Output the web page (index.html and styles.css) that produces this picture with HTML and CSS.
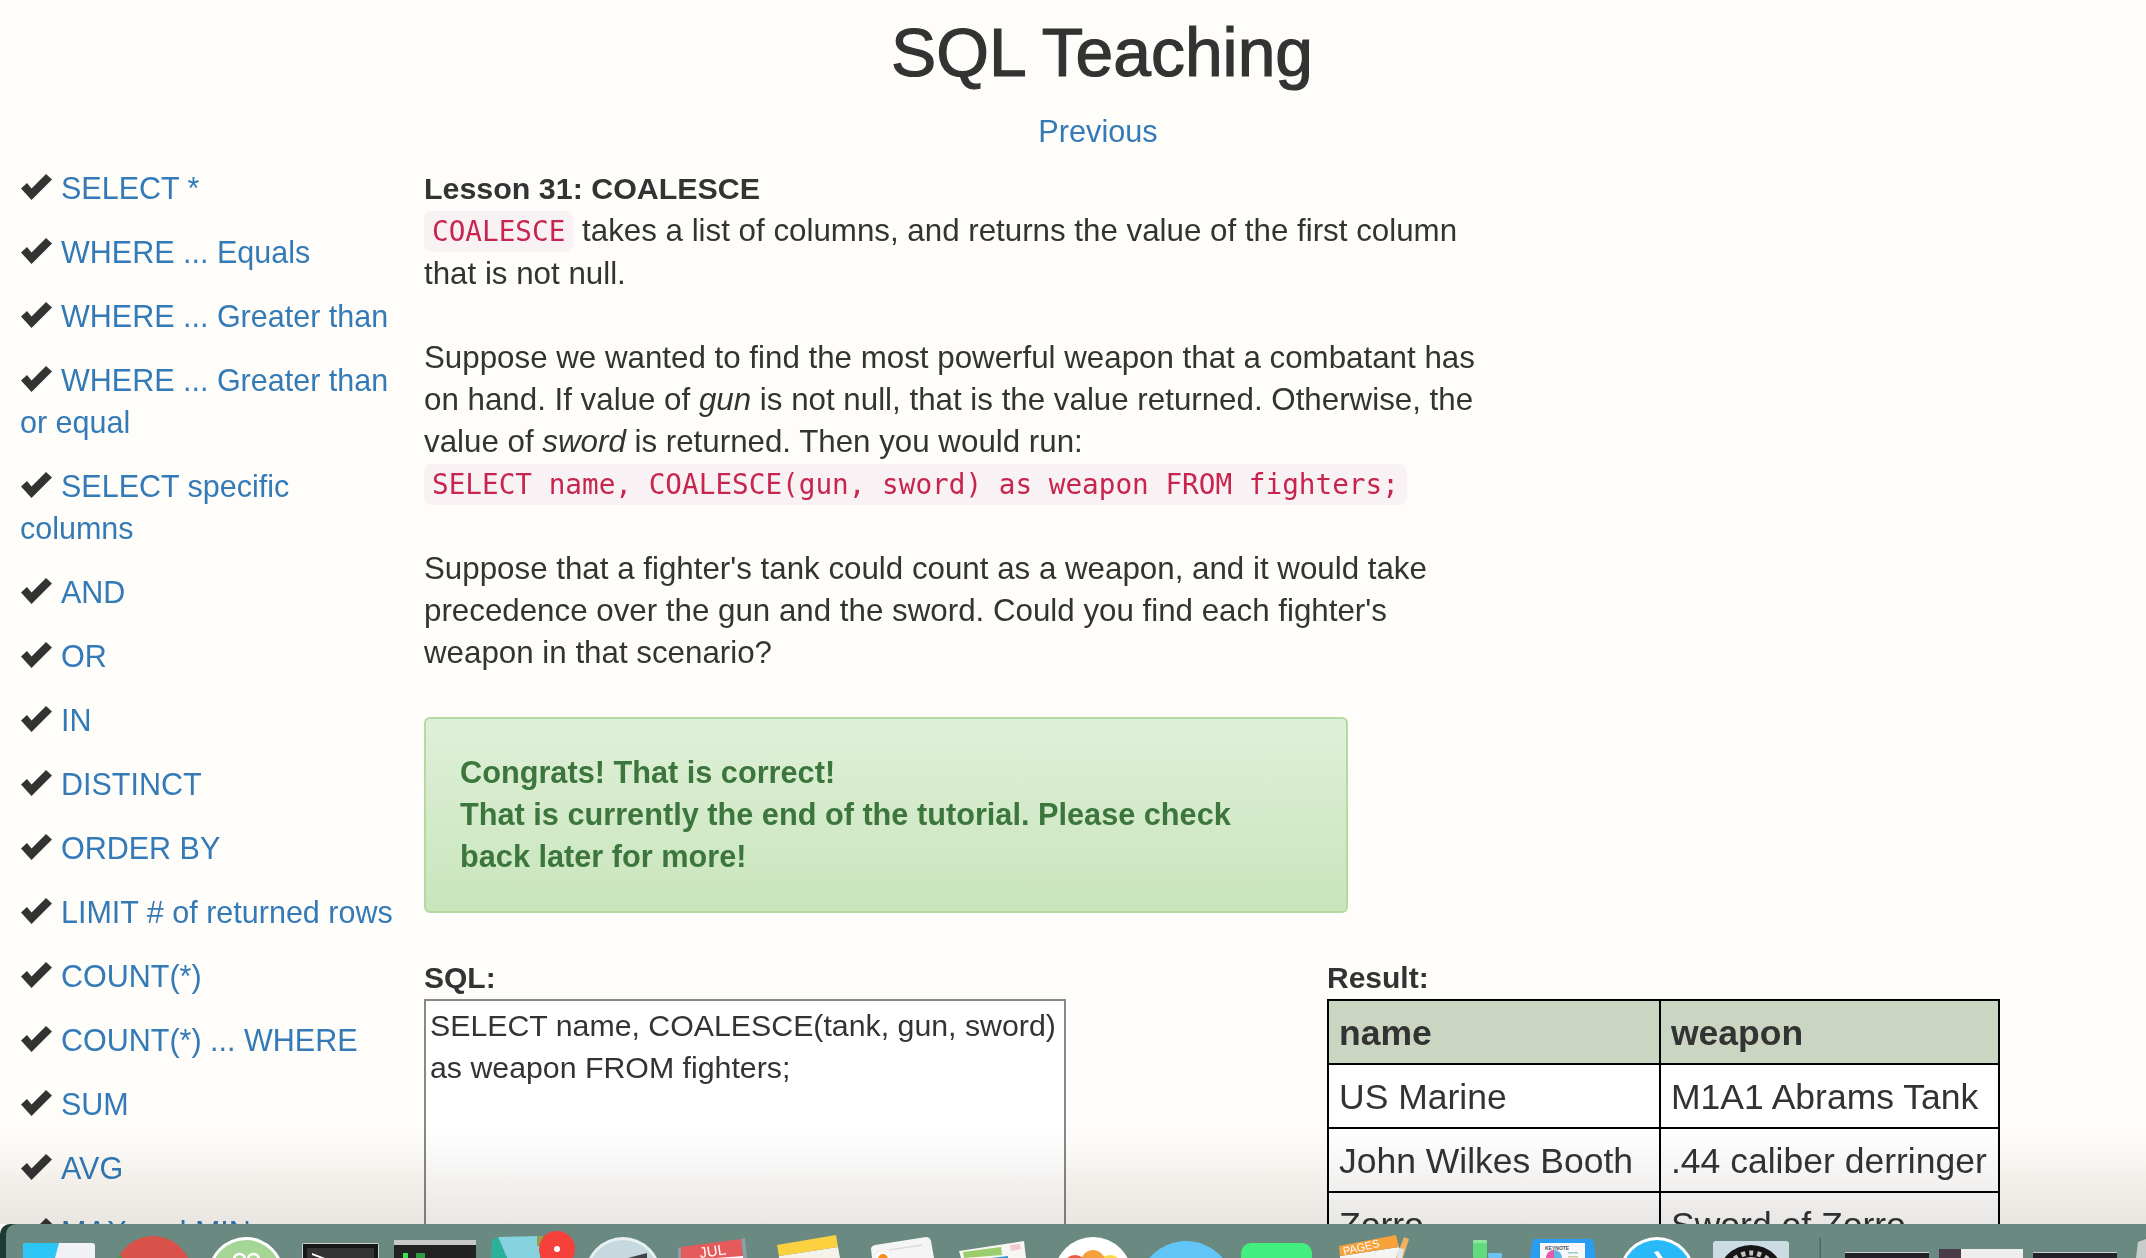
FILE: index.html
```html
<!DOCTYPE html>
<html lang="en">
<head>
  <meta charset="UTF-8" />
  <title>SQL Teaching</title>
  <link rel="stylesheet" href="styles.css">
</head>
<body>
  <header>
    <h1>SQL Teaching</h1>
    <a class="prev" href="#">Previous</a>
  </header>

  <div class="content">
    <ul class="lessons">
      <li><svg class="check" viewBox="0 0 31 26"><polygon points="0,14.5 6,9 10.5,14.5 25,0 31,5.5 10.5,26"/></svg><a href="#">SELECT *</a></li>
      <li><svg class="check" viewBox="0 0 31 26"><polygon points="0,14.5 6,9 10.5,14.5 25,0 31,5.5 10.5,26"/></svg><a href="#">WHERE ... Equals</a></li>
      <li><svg class="check" viewBox="0 0 31 26"><polygon points="0,14.5 6,9 10.5,14.5 25,0 31,5.5 10.5,26"/></svg><a href="#">WHERE ... Greater than</a></li>
      <li><svg class="check" viewBox="0 0 31 26"><polygon points="0,14.5 6,9 10.5,14.5 25,0 31,5.5 10.5,26"/></svg><a href="#">WHERE ... Greater than or equal</a></li>
      <li><svg class="check" viewBox="0 0 31 26"><polygon points="0,14.5 6,9 10.5,14.5 25,0 31,5.5 10.5,26"/></svg><a href="#">SELECT specific columns</a></li>
      <li><svg class="check" viewBox="0 0 31 26"><polygon points="0,14.5 6,9 10.5,14.5 25,0 31,5.5 10.5,26"/></svg><a href="#">AND</a></li>
      <li><svg class="check" viewBox="0 0 31 26"><polygon points="0,14.5 6,9 10.5,14.5 25,0 31,5.5 10.5,26"/></svg><a href="#">OR</a></li>
      <li><svg class="check" viewBox="0 0 31 26"><polygon points="0,14.5 6,9 10.5,14.5 25,0 31,5.5 10.5,26"/></svg><a href="#">IN</a></li>
      <li><svg class="check" viewBox="0 0 31 26"><polygon points="0,14.5 6,9 10.5,14.5 25,0 31,5.5 10.5,26"/></svg><a href="#">DISTINCT</a></li>
      <li><svg class="check" viewBox="0 0 31 26"><polygon points="0,14.5 6,9 10.5,14.5 25,0 31,5.5 10.5,26"/></svg><a href="#">ORDER BY</a></li>
      <li><svg class="check" viewBox="0 0 31 26"><polygon points="0,14.5 6,9 10.5,14.5 25,0 31,5.5 10.5,26"/></svg><a href="#">LIMIT # of returned rows</a></li>
      <li><svg class="check" viewBox="0 0 31 26"><polygon points="0,14.5 6,9 10.5,14.5 25,0 31,5.5 10.5,26"/></svg><a href="#">COUNT(*)</a></li>
      <li><svg class="check" viewBox="0 0 31 26"><polygon points="0,14.5 6,9 10.5,14.5 25,0 31,5.5 10.5,26"/></svg><a href="#">COUNT(*) ... WHERE</a></li>
      <li><svg class="check" viewBox="0 0 31 26"><polygon points="0,14.5 6,9 10.5,14.5 25,0 31,5.5 10.5,26"/></svg><a href="#">SUM</a></li>
      <li><svg class="check" viewBox="0 0 31 26"><polygon points="0,14.5 6,9 10.5,14.5 25,0 31,5.5 10.5,26"/></svg><a href="#">AVG</a></li>
      <li><svg class="check" viewBox="0 0 31 26"><polygon points="0,14.5 6,9 10.5,14.5 25,0 31,5.5 10.5,26"/></svg><a href="#">MAX and MIN</a></li>
    </ul>

    <div class="main">
      <div class="lesson">
        <strong>Lesson 31: COALESCE</strong><br>
        <code>COALESCE</code> takes a list of columns, and returns the value of the first column that is not null.<br><br>
        Suppose we wanted to find the most powerful weapon that a combatant has on hand. If value of <em>gun</em> is not null, that is the value returned. Otherwise, the value of <em>sword</em> is returned. Then you would run:<br>
        <code>SELECT name, COALESCE(gun, sword) as weapon FROM fighters;</code><br><br>
        Suppose that a fighter's tank could count as a weapon, and it would take precedence over the gun and the sword. Could you find each fighter's weapon in that scenario?
      </div>

      <div class="alert">
        Congrats! That is correct!<br>
        That is currently the end of the tutorial. Please check back later for more!
      </div>

      <div class="workspace">
        <div class="sql-col">
          <strong>SQL:</strong>
          <textarea class="sql-box" spellcheck="false">SELECT name, COALESCE(tank, gun, sword) as weapon FROM fighters;</textarea>
        </div>
        <div class="result-col">
          <strong>Result:</strong>
          <table class="result">
            <tr><th class="name-col">name</th><th>weapon</th></tr>
            <tr><td>US Marine</td><td>M1A1 Abrams Tank</td></tr>
            <tr><td>John Wilkes Booth</td><td>.44 caliber derringer</td></tr>
            <tr><td>Zorro</td><td>Sword of Zorro</td></tr>
          </table>
        </div>
      </div>
    </div>
  </div>

  <div class="fade"></div>

  <!-- mac dock along the bottom, icons are cut off by the screen edge -->
  <div class="dock">
    <svg class="dock-icons" width="2146" height="34" viewBox="0 0 2146 34">
      <!-- finder -->
      <rect x="23" y="19" width="72" height="30" rx="3" fill="#f0f2f5"/>
      <path d="M26 19h33l-4 15H23V22a3 3 0 0 1 3-3z" fill="#2cc5f5"/>
      <!-- chrome -->
      <circle cx="153" cy="51" r="39" fill="#d9524a"/>
      <path d="M118 34l2-4 2 4z" fill="#3f9c55"/>
      <!-- green circle -->
      <circle cx="246" cy="51" r="38" fill="#fff"/>
      <circle cx="246" cy="51" r="35" fill="#a6d696"/>
      <path d="M234 36c0-8 11-8 11 0M248 36c0-8 11-8 11 0" fill="none" stroke="#fff" stroke-width="2.5"/>
      <!-- terminal -->
      <rect x="302" y="19" width="77" height="20" rx="2" fill="#c9d2d0"/>
      <rect x="303" y="20" width="75" height="18" fill="#161616"/>
      <rect x="307" y="24" width="67" height="14" fill="#333"/>
      <path d="M312 29l13 5h-5l-8-3z" fill="#fff"/>
      <!-- activity monitor -->
      <rect x="394" y="16" width="82" height="5" fill="#c8c8c8"/>
      <rect x="394" y="21" width="82" height="13" fill="#222"/>
      <rect x="403" y="29" width="5" height="5" fill="#35e04c"/>
      <rect x="416" y="29" width="9" height="5" fill="#2e9c40"/>
      <!-- mail and red badge -->
      <path d="M498 13l42-1v22h-33z" fill="#86d2df"/>
      <path d="M492 16l6-3 9 21h-16z" fill="#2cb09a"/>
      <path d="M537 12h6v10h-6z" fill="#8fa34a"/>
      <circle cx="557" cy="25" r="18" fill="#f5413a"/>
      <circle cx="557" cy="25" r="3" fill="#fff"/>
      <!-- launchpad -->
      <circle cx="623" cy="51" r="38" fill="#e8f1f2"/>
      <circle cx="623" cy="51" r="35" fill="#c5d9de"/>
      <path d="M628 34l19-5v5z" fill="#3f4448"/>
      <!-- calendar -->
      <path d="M678 24l3-1v11h-3zM741 15l4-1 2 20h-4z" fill="#8aa0a6"/>
      <path d="M681 23l60-8 2 19h-62z" fill="#e55a5a"/>
      <path d="M716 34l27-2v2z" fill="#fff"/>
      <text x="700" y="34" class="cal" transform="rotate(-8 700 34)">JUL</text>
      <!-- notes -->
      <path d="M779 32l59-9 2 11h-61z" fill="#f4f3ea"/>
      <path d="M777 21l59-10 2 12-59 9z" fill="#fbd140"/>
      <!-- contacts -->
      <path d="M875 21l51-8q4 0 5 4l3 17h-62l-1-9q0-3 4-4z" fill="#f5f5f5"/>
      <path d="M889 26l33-5" stroke="#dcdcdc" stroke-width="1.5" fill="none"/>
      <circle cx="883" cy="35" r="7" fill="#fff"/>
      <circle cx="883" cy="35" r="5" fill="#f08f1c"/>
      <!-- photo app window -->
      <path d="M959 27l65-10 2 17h-65z" fill="#f6f6f2"/>
      <path d="M963 28l38-5 1 8-38 3z" fill="#9ccd6c"/>
      <path d="M1010 21l10-1 1 5-10 2z" fill="#f4c8d0"/>
      <path d="M991 34l17-2v2z" fill="#2d9ae0"/>
      <!-- photos -->
      <circle cx="1093" cy="52" r="39" fill="#fff"/>
      <circle cx="1075" cy="43" r="12" fill="#ea5c44"/>
      <circle cx="1110" cy="43" r="12" fill="#f9dc3e"/>
      <circle cx="1093" cy="38" r="12" fill="#f5a03f"/>
      <!-- blue circle -->
      <circle cx="1186" cy="65" r="48" fill="#61c5f8"/>
      <!-- messages -->
      <rect x="1241" y="19" width="71" height="34" rx="10" fill="#41ee7e"/>
      <!-- pages -->
      <path d="M1340 32l59-9 2 11h-61z" fill="#f4f4f2"/>
      <path d="M1339 22l57-11 3 12-59 9z" fill="#f7a23a"/>
      <path d="M1404 13l5 2-6 19h-7z" fill="#f0b060"/>
      <path d="M1399 24l5 1-2 9h-5z" fill="#dfe6ee"/>
      <text x="1344" y="31" class="pages" transform="rotate(-13 1344 31)">PAGES</text>
      <!-- numbers -->
      <rect x="1473" y="16" width="14" height="18" rx="1" fill="#62db7f"/>
      <rect x="1473" y="16" width="14" height="3" rx="1" fill="#8ee6a2"/>
      <rect x="1488" y="29" width="14" height="5" rx="1" fill="#6cc3ef"/>
      <!-- keynote -->
      <path d="M1533 15h60l3 19h-66z" fill="#2b9df0"/>
      <rect x="1540" y="19" width="45" height="15" fill="#f6f8fa"/>
      <text x="1545" y="26" class="keynote">KEYNOTE</text>
      <path d="M1554 34v-8a8 8 0 0 1 8 8z" fill="#5bb8e8"/>
      <path d="M1554 34v-8a8 8 0 0 0-8 8z" fill="#e85aa8"/>
      <rect x="1568" y="28" width="10" height="1.5" fill="#9cc"/>
      <rect x="1568" y="32" width="10" height="1.5" fill="#cc9"/>
      <!-- app store -->
      <circle cx="1657" cy="51" r="38" fill="#fff"/>
      <circle cx="1657" cy="51" r="35" fill="#29b9f8"/>
      <path d="M1654 28l4-1 5 7h-5z" fill="#fff"/>
      <!-- system preferences -->
      <rect x="1713" y="17" width="76" height="34" rx="3" fill="#cbdde3"/>
      <circle cx="1751" cy="55" r="34" fill="#161616"/>
      <circle cx="1751" cy="55" r="26" fill="none" stroke="#c2c2c2" stroke-width="5" stroke-dasharray="4 4"/>
      <circle cx="1751" cy="55" r="22" fill="#b5b5b5"/>
      <!-- divider -->
      <rect x="1819.5" y="14" width="1.5" height="20" fill="#4a6a62"/>
      <!-- minimised windows -->
      <rect x="1845" y="29" width="84" height="5" fill="#222228"/>
      <rect x="1845" y="28" width="84" height="1" fill="#d0d0d0"/>
      <rect x="1939" y="25" width="84" height="9" fill="#eeeeee"/>
      <rect x="1939" y="25" width="22" height="9" fill="#4a3b48"/>
      <rect x="2033" y="29" width="84" height="5" fill="#222228"/>
      <rect x="2033" y="28" width="84" height="1" fill="#d0d0d0"/>
      <path d="M2136 34l2-16 8-3v19z" fill="#c8ccca"/>
    </svg>
  </div>
</body>
</html>
```

FILE: styles.css
```css
body {
  margin: 0;
  height: 1258px;
  overflow: hidden;
  position: relative;
  background-color: #fffdfa;
  color: #333;
  font-family: "Liberation Sans", Arial, sans-serif;
  font-size: 30px;
  line-height: 42px;
}

a {
  color: #337ab7;
  text-decoration: none;
}

header {
  text-align: center;
  width: 2204px;
}

h1 {
  margin: 0;
  padding-top: 20px;
  font-size: 67.8px;
  font-weight: 400;
  line-height: 66px;
  -webkit-text-stroke: 1.2px #333;
}

.prev {
  display: inline-block;
  margin-top: 25px;
  margin-right: 8px;
  font-size: 30.7px;
}

.content {
  display: flex;
  margin-top: 14px;
  padding-left: 20px;
}

.lessons {
  list-style: none;
  margin: 0;
  padding: 0;
  width: 384px;
  flex-shrink: 0;
  font-size: 30.5px;
}

.lessons li {
  margin-bottom: 22px;
}

.check {
  width: 31px;
  height: 26px;
  margin-left: 1px;
  margin-right: 9px;
  fill: #333;
  vertical-align: -1px;
}

.main {
  margin-left: 20px;
  width: 1680px;
}

.lesson {
  width: 1060px;
  font-size: 31.3px;
}

.lesson strong {
  font-size: 30.4px;
}

code {
  padding: 4px 8px;
  background-color: #f9f2f4;
  border-radius: 8px;
  color: #c7254e;
  font-family: "DejaVu Sans Mono", "Liberation Mono", monospace;
  font-size: 27.7px;
}

.alert {
  width: 924px;
  box-sizing: border-box;
  margin-top: 43px;
  padding: 33px 50px 33px 34px;
  border: 2px solid #b2dba1;
  border-radius: 6px;
  background-image: linear-gradient(to bottom, #dff0d8, #c8e5bc);
  color: #3c763d;
  font-size: 30.7px;
  font-weight: bold;
}

.workspace {
  display: flex;
  margin-top: 44px;
}

.sql-col {
  width: 903px;
}

.sql-col strong, .result-col strong {
  display: block;
}

.sql-box {
  display: block;
  box-sizing: border-box;
  width: 642px;
  height: 300px;
  padding: 4px 4px;
  border: 2px solid #888;
  background: #fff;
  color: #333;
  font: inherit;
  font-size: 30.3px;
  resize: none;
  outline: none;
}

.result {
  width: 673px;
  border-collapse: collapse;
  border: 2px solid #000;
  background: #fff;
  font-size: 35.5px;
}

.result th, .result td {
  padding: 11px 10px 9px;
  border: 2px solid #000;
  text-align: left;
  white-space: nowrap;
}

.result th {
  background-color: #cad6c2;
}

.result .name-col {
  width: 310px;
}

/* grey fade above the dock, multiplied so the text stays dark */
.fade {
  position: absolute;
  left: 0;
  right: 0;
  top: 1130px;
  height: 94px;
  background-image: linear-gradient(to bottom, #fff, #e9e7e5);
  mix-blend-mode: multiply;
}

.dock {
  position: absolute;
  left: 6px;
  right: 0;
  bottom: 0;
  height: 34px;
  background-color: #6a8a81;
  border-top-left-radius: 10px;
  box-shadow: -6px 0 0 #1d3a34;
}

.dock-icons {
  display: block;
  margin-left: -6px;
}

.cal {
  fill: #fff;
  font-family: "Liberation Sans", Arial, sans-serif;
  font-size: 15px;
}

.pages {
  fill: #fff;
  font-family: "Liberation Sans", Arial, sans-serif;
  font-size: 11px;
}

.keynote {
  fill: #556;
  font-family: "Liberation Sans", Arial, sans-serif;
  font-size: 5px;
  font-weight: bold;
}
```
